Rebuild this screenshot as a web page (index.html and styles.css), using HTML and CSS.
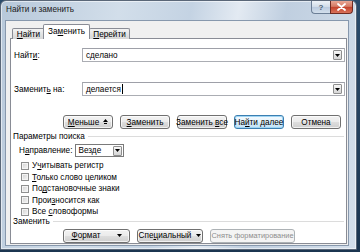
FILE: index.html
```html
<!DOCTYPE html>
<html lang="ru">
<head>
<meta charset="utf-8">
<link rel="stylesheet" href="styles.css">
</head>
<body>
<div class="window">
  <div class="titlebar">
    <span class="title">Найти и заменить</span>
    <div class="caption-btns">
      <span class="cap-help">?</span>
      <span class="cap-close">
        <svg width="9" height="8" viewBox="0 0 9 8"><path d="M1 1 L8 7 M8 1 L1 7" stroke="#fff" stroke-width="1.8" stroke-linecap="round"/></svg>
      </span>
    </div>
  </div>
  <div class="client">
    <div class="tabs">
      <div class="tab first"><span><u>Н</u>айти</span></div>
      <div class="tab active"><span>За<u>м</u>енить</span></div>
      <div class="tab last"><span><u>П</u>ерейти</span></div>
    </div>
    <div class="panel">
      <div class="field-row">
        <span class="field-label">Найт<u>и</u>:</span>
        <div class="combo">
          <span class="combo-text">сделано</span>
          <span class="drop"><svg width="5" height="3" viewBox="0 0 5 3"><path d="M0 0 H5 L2.5 3 Z" fill="#000"/></svg></span>
        </div>
      </div>
      <div class="field-row second">
        <span class="field-label">Заменит<u>ь</u> на:</span>
        <div class="combo">
          <span class="combo-text"><span>делается</span><span class="caret"></span></span>
          <span class="drop"><svg width="5" height="3" viewBox="0 0 5 3"><path d="M0 0 H5 L2.5 3 Z" fill="#000"/></svg></span>
        </div>
      </div>
      <div class="btn-row top-btns">
        <span class="btn"><span><u>М</u>еньше</span><svg class="up" width="5" height="5" viewBox="0 0 5 5"><path d="M0 3 L2.5 0 L5 3 Z M1 4 H4 V5 H1 Z" fill="#000"/></svg></span>
        <span class="btn"><span><u>З</u>аменить</span></span>
        <span class="btn"><span>Заменить <u>в</u>се</span></span>
        <span class="btn default"><span>На<u>й</u>ти далее</span></span>
        <span class="btn"><span>Отмена</span></span>
      </div>
      <div class="group-title"><span>Параметры поиска</span></div>
      <div class="direction">
        <span class="dir-label">Н<u>а</u>правление:</span>
        <div class="select">
          <span class="select-text">Везде</span>
          <span class="sdrop"><svg width="5" height="3" viewBox="0 0 5 3"><path d="M0 0 H5 L2.5 3 Z" fill="#000"/></svg></span>
        </div>
      </div>
      <div class="checks">
        <div class="check"><span class="box"></span><span>У<u>ч</u>итывать регистр</span></div>
        <div class="check"><span class="box"></span><span><u>Т</u>олько слово целиком</span></div>
        <div class="check"><span class="box"></span><span>По<u>д</u>становочные знаки</span></div>
        <div class="check"><span class="box"></span><span>Прои<u>з</u>носится как</span></div>
        <div class="check"><span class="box"></span><span>Все <u>с</u>ловоформы</span></div>
      </div>
      <div class="group-title replace-title"><span>Заменить</span></div>
      <div class="btn-row bottom-btns">
        <span class="btn wide1"><span><u>Ф</u>ормат</span><svg width="5" height="3" viewBox="0 0 5 3"><path d="M0 0 H5 L2.5 3 Z" fill="#000"/></svg></span>
        <span class="btn wide2"><span>Спе<u>ц</u>иальный</span><svg width="5" height="3" viewBox="0 0 5 3"><path d="M0 0 H5 L2.5 3 Z" fill="#000"/></svg></span>
        <span class="btn disabled"><span>Снять форматирование</span></span>
      </div>
    </div>
  </div>
</div>
</body>
</html>
```

FILE: styles.css
```css
html, body {
  margin: 0;
  padding: 0;
}
body {
  width: 360px;
  height: 252px;
  overflow: hidden;
  background: linear-gradient(#2b4c6c, #1b3550);
  font-family: "Liberation Sans", Arial, sans-serif;
  font-size: 8.2px;
  color: #000;
}
u { text-decoration: underline; text-underline-offset: 1px; }

.window {
  box-sizing: border-box;
  width: 357px;
  height: 250px;
  border: 1px solid #5a6778;
  border-radius: 6px 6px 0 0;
  background: linear-gradient(100deg, #b7c8da 0%, #d2deea 30%, #c4d3e3 48%, #e3eaf2 60%, #c0cfe0 72%, #d4dfeb 100%);
  display: flex;
  flex-direction: column;
  padding: 0 7px 4px 4px;
  box-shadow: inset 0 0 0 1px rgba(255,255,255,0.55);
}

.titlebar {
  height: 19px;
  display: flex;
  align-items: flex-start;
  justify-content: space-between;
  flex: none;
}
.title {
  margin: 4px 0 0 1px;
  color: #1a1a1a;
}
.caption-btns {
  display: flex;
  margin-right: -4px;
}
.cap-help, .cap-close {
  box-sizing: border-box;
  height: 13px;
  display: flex;
  align-items: center;
  justify-content: center;
  border: 1px solid #6c7f96;
  border-top: none;
}
.cap-help {
  width: 19px;
  border-radius: 0 0 0 4px;
  border-right: none;
  background: linear-gradient(#eef3f8, #cfdbe8 50%, #b9cade 51%, #d3dfec);
  color: #4c5e74;
  font-size: 8px;
  font-weight: bold;
}
.cap-close {
  width: 23px;
  border-radius: 0 0 4px 0;
  border-color: #6f2b22;
  background: linear-gradient(#e9a795, #d47a64 45%, #c4432c 52%, #d8735c);
}

.client {
  flex: 1;
  background: #f0f0f0;
  border: 1px solid #8798ad;
  padding: 4px 1px 1px 4px;
  display: flex;
  flex-direction: column;
}

.tabs {
  display: flex;
  align-items: flex-end;
  margin-left: 2px;
  height: 14px;
  position: relative;
  z-index: 1;
  margin-bottom: -1px;
}
.tab {
  box-sizing: border-box;
  height: 11px;
  border: 1px solid #898c95;
  border-bottom: none;
  border-radius: 2px 2px 0 0;
  background: linear-gradient(#f3f3f3, #e3e3e3 50%, #d7d7d7);
  display: flex;
  align-items: center;
  justify-content: center;
  margin-right: -1px;
}
.tab.first { width: 33px; }
.tab.active {
  height: 15px;
  width: 47px;
  background: #fff;
  margin: 0 -1px 0 -1px;
  position: relative;
  z-index: 2;
  padding-bottom: 2px;
}
.tab.last { width: 41px; }

.panel {
  flex: 1;
  background: #fff;
  border: 1px solid #898c95;
  display: flex;
  flex-direction: column;
  padding-right: 1px;
}

.field-row {
  display: flex;
  align-items: center;
  margin-top: 9px;
}
.field-row.second { margin-top: 20px; }
.field-label {
  width: 68px;
  padding-left: 3px;
}
.combo {
  box-sizing: border-box;
  flex: 1;
  height: 14px;
  border: 1px solid #abadb3;
  border-top-color: #9ea0a8;
  display: flex;
  align-items: center;
  justify-content: space-between;
  padding-left: 3px;
}
.combo-text { display: flex; align-items: center; }
.caret {
  display: inline-block;
  width: 1px;
  height: 10px;
  background: #000;
  margin-left: 1px;
}
.drop, .sdrop {
  box-sizing: border-box;
  width: 9px;
  height: 10px;
  border: 1px solid #8f8f8f;
  border-radius: 1px;
  background: linear-gradient(#f7f7f7, #e6e6e6 50%, #d6d6d6);
  display: flex;
  align-items: center;
  justify-content: center;
  margin-right: 2px;
}

.btn-row {
  display: flex;
  gap: 7px;
  padding-left: 52px;
}
.top-btns { margin-top: 19px; }
.btn {
  box-sizing: border-box;
  height: 14px;
  width: 50px;
  border: 1px solid #707070;
  border-radius: 3px;
  background: linear-gradient(#f2f2f2, #ebebeb 48%, #dddddd 52%, #cfcfcf);
  display: flex;
  align-items: center;
  justify-content: center;
  gap: 4px;
  white-space: nowrap;
  box-shadow: inset 0 0 0 1px rgba(255,255,255,0.7);
}
.btn.default {
  border-color: #3c7fb1;
  background: linear-gradient(#f4fafe, #e5f3fc 48%, #d3ebfa 52%, #c4e3f7);
  box-shadow: inset 0 0 0 1px #9fd5f4;
}
.btn .up { margin-top: -1px; }

.group-title {
  display: flex;
  align-items: center;
  margin-top: 2px;
  padding-left: 2px;
  height: 11px;
}
.group-title::after {
  content: "";
  flex: 1;
  height: 1px;
  background: #dcdcdc;
  margin: 0 1px 0 3px;
}

.direction {
  display: flex;
  align-items: center;
  gap: 3px;
  margin-top: 2px;
  padding-left: 8px;
}
.select {
  box-sizing: border-box;
  width: 49px;
  height: 13px;
  border: 1px solid #7a7a7a;
  display: flex;
  align-items: center;
  justify-content: space-between;
  padding-left: 2px;
}
.sdrop { margin-right: 1px; height: 10px; }

.checks {
  display: flex;
  flex-direction: column;
  margin-top: 3px;
  padding-left: 10px;
}
.check {
  display: flex;
  align-items: center;
  height: 11.5px;
  gap: 3px;
}
.box {
  box-sizing: border-box;
  width: 8px;
  height: 8px;
  border: 1px solid #8e8f8f;
  background: linear-gradient(135deg, #d0d0d0, #e8e8e8 60%, #f6f6f6);
  box-shadow: inset 0 0 0 1px #f4f4f4;
}

.replace-title { margin-top: -2px; }

.bottom-btns { margin-top: 2px; }
.btn.wide1 { width: 67px; gap: 16px; }
.btn.wide2 { width: 66px; gap: 5px; }
.btn.disabled {
  width: 85px;
  font-size: 7.4px;
  border-color: #adb2b5;
  background: #f4f4f4;
  color: #8d8d8d;
  box-shadow: none;
}
```
